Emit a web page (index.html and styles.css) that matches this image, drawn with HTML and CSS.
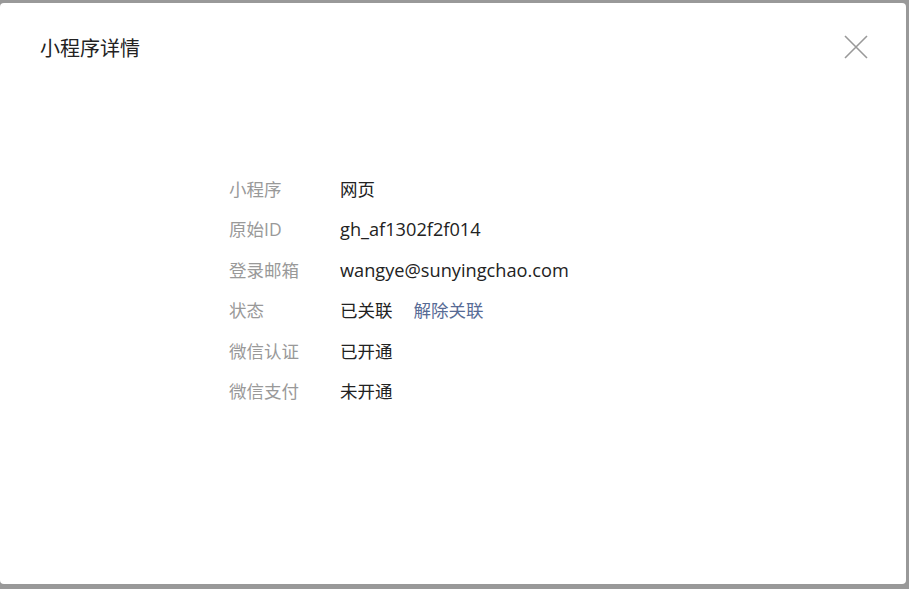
FILE: index.html
```html
<!DOCTYPE html>
<html lang="zh-CN">
<head>
<meta charset="utf-8">
<title>小程序详情</title>
<link rel="stylesheet" href="styles.css">
</head>
<body>
<div class="dialog">
  <div class="dialog-head">
    <h3 class="dialog-title">小程序详情</h3>
    <button class="dialog-close" aria-label="关闭">
      <svg width="24" height="24" viewBox="0 0 24 24"><path d="M1 1 L23 23 M23 1 L1 23" stroke="#999" stroke-width="1.6" fill="none"/></svg>
    </button>
  </div>
  <div class="dialog-body">
    <dl class="info">
      <div class="row"><dt>小程序</dt><dd>网页</dd></div>
      <div class="row"><dt>原始ID</dt><dd class="latin">gh_af1302f2f014</dd></div>
      <div class="row"><dt>登录邮箱</dt><dd class="latin">wangye@sunyingchao.com</dd></div>
      <div class="row"><dt>状态</dt><dd>已关联<a class="link" href="#">解除关联</a></dd></div>
      <div class="row"><dt>微信认证</dt><dd>已开通</dd></div>
      <div class="row"><dt>微信支付</dt><dd>未开通</dd></div>
    </dl>
  </div>
</div>
</body>
</html>
```
FILE: styles.css
```css
html, body {
  margin: 0;
  padding: 0;
  height: 100%;
}
body {
  background: #999;
  font-family: "Open Sans", "Noto Sans CJK SC", sans-serif;
  color: #222;
}
.dialog {
  box-sizing: border-box;
  width: 906px;
  height: 581px;
  margin-top: 3px;
  background: #fff;
  border-radius: 4px;
}
.dialog-head {
  display: flex;
  align-items: center;
  justify-content: space-between;
  height: 88px;
  padding: 0 38px 0 40px;
}
.dialog-title {
  margin: 0;
  font-size: 20px;
  font-weight: normal;
  color: #222;
}
.dialog-close {
  border: 0;
  background: none;
  padding: 0;
  width: 24px;
  height: 24px;
  display: block;
}
.dialog-close svg { display: block; }
.dialog-body {
  padding: 78px 0 0 229px;
}
.info {
  margin: 0;
  font-size: 17.5px;
}
.row {
  display: flex;
  height: 40.4px;
  line-height: 40.4px;
}
.row dt {
  width: 111px;
  color: #999;
}
.row dd {
  margin: 0;
  color: #222;
}
.row dd.latin {
  font-size: 18.2px;
}
.link {
  margin-left: 21px;
  color: #576b95;
  text-decoration: none;
}
```
